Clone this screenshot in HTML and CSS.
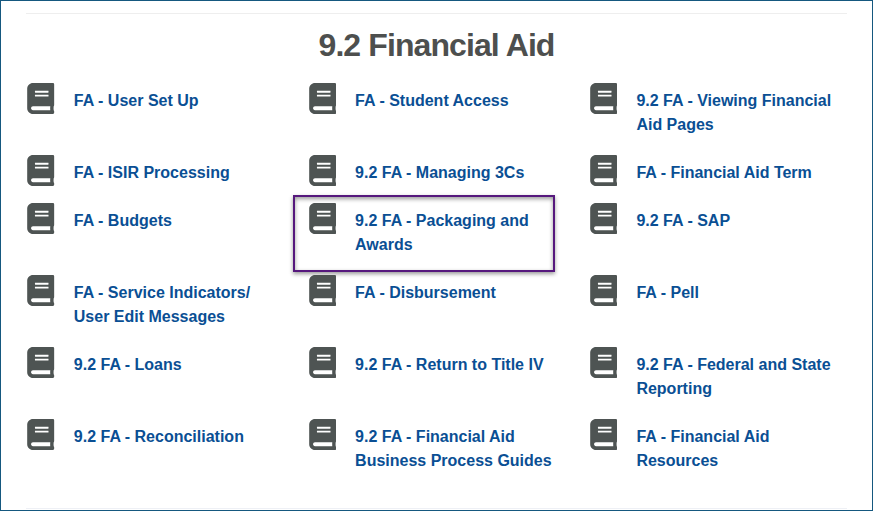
FILE: index.html
```
<!DOCTYPE html>
<html lang="en">
<head>
    <meta charset="UTF-8">
    <meta name="viewport" content="width=device-width, initial-scale=1.0">
    <title>9.2 Financial Aid</title>
    <link rel="stylesheet" href="styles.css">
</head>
<body>

    <svg width="0" height="0" class="sprite">
        <symbol id="book" viewBox="0 0 448 512">
            <path d="M448 360V24c0-13.300-10.700-24-24-24H96C43 0 0 43 0 96v320c0 53 43 96 96 96h328c13.300 0 24-10.700 24-24v-16c0-7.500-3.500-14.300-8.900-18.700-4.200-15.400-4.200-59.300 0-74.700 5.400-4.300 8.900-11.100 8.900-18.600zM128 134c0-3.300 2.700-6 6-6h212c3.300 0 6 2.700 6 6v20c0 3.300-2.700 6-6 6H134c-3.300 0-6-2.700-6-6v-20zm0 64c0-3.300 2.700-6 6-6h212c3.300 0 6 2.700 6 6v20c0 3.300-2.700 6-6 6H134c-3.300 0-6-2.700-6-6v-20zm253.400 250H96c-17.700 0-32-14.300-32-32 0-17.600 14.400-32 32-32h285.400c-1.900 17.100-1.900 46.900 0 64z"/>
        </symbol>
    </svg>

    <div class="page">
        <h2>9.2 Financial Aid</h2>
        <div class="guides">
            <div class="guide"><svg class="icon"><use href="#book"/></svg><a href="#">FA - User Set Up</a></div>
            <div class="guide"><svg class="icon"><use href="#book"/></svg><a href="#">FA - Student Access</a></div>
            <div class="guide"><svg class="icon"><use href="#book"/></svg><a href="#">9.2 FA - Viewing Financial<br>Aid Pages</a></div>

            <div class="guide"><svg class="icon"><use href="#book"/></svg><a href="#">FA - ISIR Processing</a></div>
            <div class="guide"><svg class="icon"><use href="#book"/></svg><a href="#">9.2 FA - Managing 3Cs</a></div>
            <div class="guide"><svg class="icon"><use href="#book"/></svg><a href="#">FA - Financial Aid Term</a></div>

            <div class="guide"><svg class="icon"><use href="#book"/></svg><a href="#">FA - Budgets</a></div>
            <div class="guide highlight"><svg class="icon"><use href="#book"/></svg><a href="#">9.2 FA - Packaging and<br>Awards</a></div>
            <div class="guide"><svg class="icon"><use href="#book"/></svg><a href="#">9.2 FA - SAP</a></div>

            <div class="guide"><svg class="icon"><use href="#book"/></svg><a href="#">FA - Service Indicators/<br>User Edit Messages</a></div>
            <div class="guide"><svg class="icon"><use href="#book"/></svg><a href="#">FA - Disbursement</a></div>
            <div class="guide"><svg class="icon"><use href="#book"/></svg><a href="#">FA - Pell</a></div>

            <div class="guide"><svg class="icon"><use href="#book"/></svg><a href="#">9.2 FA - Loans</a></div>
            <div class="guide"><svg class="icon"><use href="#book"/></svg><a href="#">9.2 FA - Return to Title IV</a></div>
            <div class="guide"><svg class="icon"><use href="#book"/></svg><a href="#">9.2 FA - Federal and State<br>Reporting</a></div>

            <div class="guide"><svg class="icon"><use href="#book"/></svg><a href="#">9.2 FA - Reconciliation</a></div>
            <div class="guide"><svg class="icon"><use href="#book"/></svg><a href="#">9.2 FA - Financial Aid<br>Business Process Guides</a></div>
            <div class="guide"><svg class="icon"><use href="#book"/></svg><a href="#">FA - Financial Aid<br>Resources</a></div>
        </div>
    </div>

</body>
</html>
```
FILE: styles.css
```
* {
    margin: 0;
    padding: 0;
    box-sizing: border-box;
}
body {
    background: #fff;
    font-family: "Liberation Sans", Arial, sans-serif;
}
.sprite {
    display: block;
}
.page {
    height: 511px;
    border: 1px solid #15587f;
    padding: 12px 25px 0 25px;
}
h2 {
    border-top: 1px solid #eee;
    padding-top: 11px;
    height: 76px;
    font-size: 32px;
    line-height: 40px;
    letter-spacing: -0.9px;
    color: #4d4f4e;
    text-align: center;
}
.guides {
    display: grid;
    grid-template-columns: 281.3px 281.3px 1fr;
    height: 420px;
    align-content: start;
    border-bottom: 1px solid #eef0f5;
}
.guide {
    position: relative;
    display: flex;
    align-items: flex-start;
    padding: 0 0 24px 1.3px;
}
.icon {
    width: 27.5px;
    height: 31px;
    margin: -6px 19px -1px 0;
    fill: #4e5453;
}
.guide a {
    color: #0a4f94;
    font-size: 16px;
    font-weight: bold;
    line-height: 24px;
    text-decoration: none;
}
/* frame drawn around the selected guide */
.highlight::after {
    content: "";
    box-sizing: border-box;
    position: absolute;
    top: -14px;
    left: -14px;
    width: 262px;
    height: 77px;
    border: 2px solid #56187d;
    box-shadow: 0 2px 4px rgba(0,0,0,0.4), inset 0 2px 4px rgba(0,0,0,0.4);
}
```
